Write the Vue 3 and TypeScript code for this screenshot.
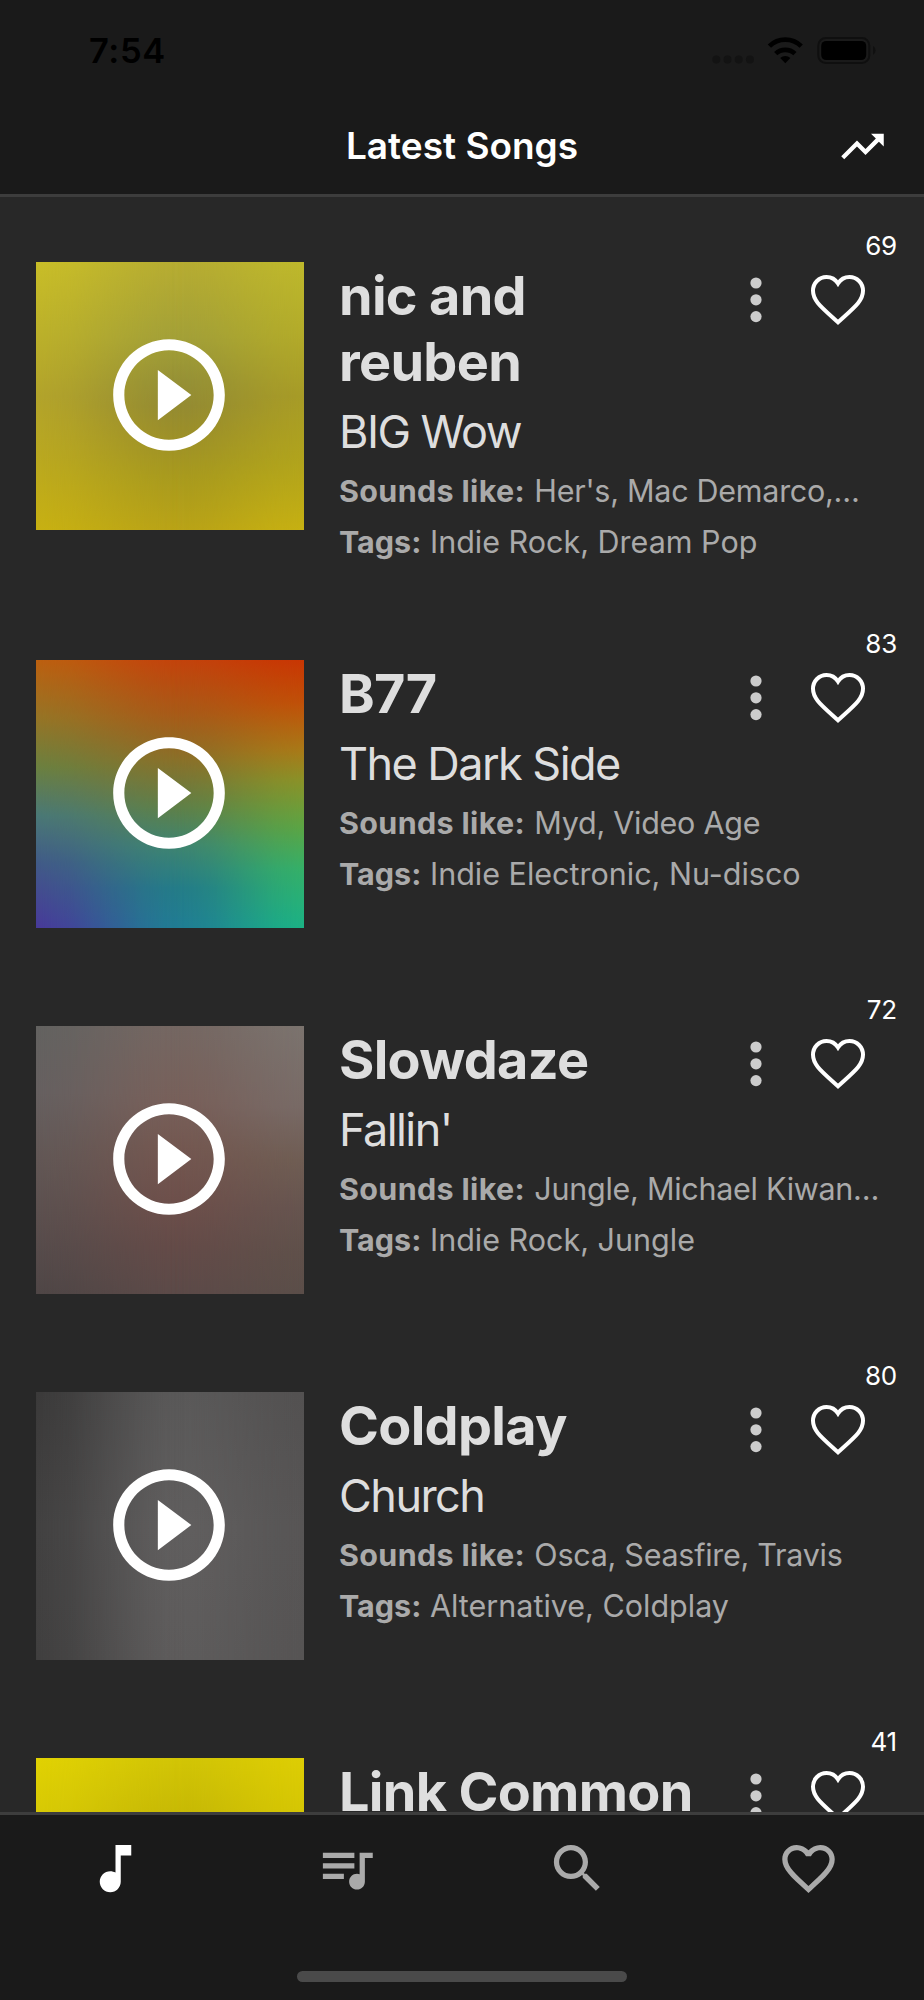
<script setup lang="ts">
interface Song {
  artist: string[]
  title?: string
  soundsLike?: string
  tags?: string
  likes: number
  cover: string
}

const songs: Song[] = [
  { artist: ['nic and', 'reuben'], title: 'BIG Wow', soundsLike: "Her's, Mac Demarco,…", tags: 'Indie Rock, Dream Pop', likes: 69, cover: 'olive' },
  { artist: ['B77'], title: 'The Dark Side', soundsLike: 'Myd, Video Age', tags: 'Indie Electronic, Nu-disco', likes: 83, cover: 'spectrum' },
  { artist: ['Slowdaze'], title: "Fallin'", soundsLike: 'Jungle, Michael Kiwan…', tags: 'Indie Rock, Jungle', likes: 72, cover: 'clay' },
  { artist: ['Coldplay'], title: 'Church', soundsLike: 'Osca, Seasfire, Travis', tags: 'Alternative, Coldplay', likes: 80, cover: 'graphite' },
  { artist: ['Link Common'], likes: 41, cover: 'lemon' },
]

const tabs = [
  { name: 'Songs', active: true, d: 'M12 3v10.55c-.59-.34-1.27-.55-2-.55-2.21 0-4 1.79-4 4s1.79 4 4 4 4-1.79 4-4V7h4V3h-6z' },
  { name: 'Playlists', active: false, d: 'M15 6H3v2h12V6zm0 4H3v2h12v-2zM3 16h8v-2H3v2zM17 6v8.18c-.31-.11-.65-.18-1-.18-1.66 0-3 1.34-3 3s1.34 3 3 3 3-1.34 3-3V8h3V6h-5z' },
  { name: 'Search', active: false, d: 'M15.5 14h-.79l-.28-.27C15.41 12.59 16 11.11 16 9.5 16 5.91 13.09 3 9.5 3S3 5.91 3 9.5 5.91 16 9.5 16c1.61 0 3.09-.59 4.23-1.57l.27.28v.79l5 4.99L20.49 19l-4.99-5zm-6 0C7.01 14 5 11.99 5 9.5S7.01 5 9.5 5 14 7.01 14 9.5 11.99 14 9.5 14z' },
  { name: 'Favourites', active: false, d: 'M16.5 3c-1.74 0-3.41.81-4.5 2.09C10.91 3.81 9.24 3 7.5 3 4.42 3 2 5.42 2 8.5c0 3.78 3.4 6.86 8.55 11.54L12 21.35l1.45-1.32C18.6 15.36 22 12.28 22 8.5 22 5.42 19.58 3 16.5 3zm-4.4 15.55l-.1.1-.1-.1C7.14 14.24 4 11.39 4 8.5 4 6.5 5.5 5 7.5 5c1.54 0 3.04.99 3.57 2.36h1.87C13.46 5.99 14.96 5 16.5 5c2 0 3.5 1.5 3.5 3.5 0 2.89-3.14 5.74-7.9 10.05z' },
]
</script>

<template>
  <div class="phone">
    <header class="top">
      <div class="status">
        <span class="time">7:54</span>
        <svg class="status-icons" viewBox="0 0 168 34" aria-hidden="true">
          <g fill="#131313">
            <circle cx="8.3" cy="26.6" r="4" /><circle cx="19.5" cy="26.6" r="4" /><circle cx="30.7" cy="26.6" r="4" /><circle cx="41.9" cy="26.6" r="4" />
          </g>
          <path d="M77.3 30.2l-5.1-5.2a7.4 7.4 0 0 1 10.2 0z" />
          <g fill="none" stroke="#000" stroke-width="4.7">
            <path d="M67.7 20.6a14 14 0 0 1 19.2 0" />
            <path d="M61.4 13.2a22.6 22.6 0 0 1 31.8 0" />
          </g>
          <rect x="110.3" y="5" width="51" height="25" rx="7.5" fill="none" stroke="#0f0f0f" stroke-width="2" />
          <rect x="113.2" y="7.9" width="45" height="19.2" rx="5" />
          <path d="M165 13v9q2.600-1.300 2.600-4.500T165 13z" fill="#101010" />
        </svg>
      </div>
      <div class="bar">
        <h1 class="heading">Latest Songs</h1>
        <svg class="trend" viewBox="0 0 24 24"><path d="M16 6l2.290 2.290-4.880 4.880-4-4L2 16.590 3.410 18l6-6 4 4 6.300-6.290L22 12V6z" /></svg>
      </div>
    </header>

    <main class="list">
      <article v-for="song in songs" :key="song.cover" class="song">
        <div class="cover" :class="song.cover">
          <svg class="play" viewBox="0 0 24 24"><path d="M10 16.500l6-4.500-6-4.500v9zM12 2C6.480 2 2 6.480 2 12s4.480 10 10 10 10-4.480 10-10S17.520 2 12 2zm0 18c-4.410 0-8-3.590-8-8s3.590-8 8-8 8 3.590 8 8-3.590 8-8 8z" /></svg>
        </div>
        <div class="info">
          <div class="row">
            <h2 class="artist"><span v-for="line in song.artist" :key="line">{{ line }}</span></h2>
            <svg class="more" viewBox="0 0 12 46"><circle cx="6" cy="6" r="5.600" /><circle cx="6" cy="22.800" r="5.600" /><circle cx="6" cy="39.600" r="5.600" /></svg>
            <div class="like">
              <span class="count">{{ song.likes }}</span>
              <svg class="heart" viewBox="0 0 54 50"><path d="M27 8.500C24.500 4.500 20 2 15.500 2 8 2 2 8 2 15.800 2 26 10.500 32.200 27 47.300 43.500 32.200 52 26 52 15.800 52 8 46 2 38.500 2 34 2 29.500 4.500 27 8.500z" /></svg>
            </div>
          </div>
          <p v-if="song.title" class="title">{{ song.title }}</p>
          <p v-if="song.soundsLike" class="meta sounds"><b>Sounds like:</b> {{ song.soundsLike }}</p>
          <p v-if="song.tags" class="meta tags"><b>Tags:</b> {{ song.tags }}</p>
        </div>
      </article>
    </main>

    <footer class="bottom">
      <nav class="tabs">
        <svg v-for="tab in tabs" :key="tab.name" class="tab" :class="{ active: tab.active }" viewBox="0 0 24 24" role="img" :aria-label="tab.name"><path :d="tab.d" /></svg>
      </nav>
      <div class="home"></div>
    </footer>
  </div>
</template>

<style>
body { margin: 0; background: #1a1a1a; }
</style>

<style scoped>
.phone {
  box-sizing: border-box;
  width: 924px;
  height: 2000px;
  display: flex;
  flex-direction: column;
  overflow: hidden;
  background: #282828;
  color: #fff;
  font-family: Inter, "Liberation Sans", sans-serif;
}
h1, h2, p { margin: 0; }
svg { display: block; flex: none; }

.top {
  flex: none;
  box-sizing: border-box;
  height: 197px;
  background: #1a1a1a;
  border-bottom: 3px solid #3d3d3d;
}
.status {
  box-sizing: border-box;
  height: 100px;
  display: flex;
  justify-content: space-between;
  align-items: flex-start;
  padding: 33px 48px 0 89px;
  color: #000;
}
.time { font-size: 34.5px; font-weight: 600; line-height: 36px; letter-spacing: 0.6px; }
.status-icons { width: 168px; height: 34px; }
.bar {
  display: grid;
  grid-template-columns: 1fr auto 1fr;
  align-items: center;
  height: 92px;
  padding-right: 36px;
  padding-left: 36px;
}
.heading { grid-column: 2; font-size: 37px; font-weight: 600; line-height: 44px; letter-spacing: 0; }
.trend { justify-self: end; width: 51px; height: 51px; fill: #fff; }

.list { flex: 1; min-height: 0; overflow: hidden; }
.song { display: flex; gap: 35px; padding: 65px 0 33px 36px; }
.cover {
  position: relative;
  flex: none;
  width: 268px;
  height: 268px;
  background: linear-gradient(var(--left));
}
.cover::before, .cover::after { content: ""; position: absolute; inset: 0; }
.cover::before {
  --fade: linear-gradient(to right, transparent, rgba(0, 0, 0, 0.18) 13%, rgba(0, 0, 0, 0.5) 26%, rgba(0, 0, 0, 0.82) 40%, rgba(0, 0, 0, 0.95) 48%, #000 56%);
  background: linear-gradient(var(--middle));
  -webkit-mask-image: var(--fade);
  mask-image: var(--fade);
}
.cover::after {
  --fade: linear-gradient(to right, transparent 50%, rgba(0, 0, 0, 0.06) 58%, rgba(0, 0, 0, 0.2) 66%, rgba(0, 0, 0, 0.5) 77%, rgba(0, 0, 0, 0.82) 89%, #000);
  background: linear-gradient(var(--right));
  -webkit-mask-image: var(--fade);
  mask-image: var(--fade);
}
.olive {
  --left: #c9be28, #bdb22a 25%, #b3a42b 50%, #bba91f 75%, #c8b112;
  --middle: #b6ac32, #a3a038 28%, #959036 45%, #948b32 54%, #9a8e2b 62%, #a89a1e 80%, #b9a317;
  --right: #beb82c, #b3ac2a 25%, #a79b27 50%, #b1a41c 75%, #c6b012;
}
.spectrum {
  --left: #bc6010, #957526 22%, #6b8040 40%, #4a7876 58%, #415a88 76%, #483a9a;
  --middle: #c3430c, #a85a18 20%, #8a7029 37%, #5f8048 55%, #3f8570 69%, #247c88 85%, #207d94;
  --right: #c83603, #c05008 16%, #a87a18 34%, #8a9228 45%, #5aa545 63%, #35b068 78%, #1bb285;
}
.clay {
  --left: #636260, #666060 25%, #625755 50%, #5a4e4d 75%, #4f4646;
  --middle: #756762, #78605a 28%, #745851 45%, #6e504b 65%, #644b48 82%, #5c4a48;
  --right: #7b736e, #786a66 30%, #6f5d53 50%, #66544f 68%, #5f504a 85%, #5b4e49;
}
.graphite {
  --left: #3b3a3a, #424141 50%, #403f3f;
  --middle: #5a5959, #615f5f 50%, #5e5c5c;
  --right: #535151, #575555 50%, #565454;
}
.lemon {
  --left: #e1d203, #d6c806 25%, #cabb0a 60%, #dece05;
  --middle: #d2c506, #c6b805 22%, #b5a808 55%, #cfc006;
  --right: #ddcd04, #d3c404 25%, #c8ba06 60%, #dccb04;
}
.play { position: absolute; z-index: 1; left: 66px; top: 66px; width: 134px; height: 134px; fill: #fff; }

.info { flex: 1; min-width: 0; }
.row { display: flex; align-items: flex-start; }
.artist {
  box-sizing: border-box;
  width: 411px;
  padding-top: 1px;
  display: flex;
  flex-direction: column;
  font-size: 54px;
  font-weight: 700;
  line-height: 66px;
  letter-spacing: -0.7px;
  color: #dedede;
}
.more { width: 12px; height: 46px; margin-top: 15px; fill: #ccc; }
.like { position: relative; margin: 13px 0 0 49px; }
.heart { width: 54px; height: 50px; overflow: visible; fill: none; stroke: #fff; stroke-width: 4; }
.count {
  position: absolute;
  right: -32px;
  top: -45px;
  font-size: 26px;
  line-height: 32px;
  letter-spacing: -0.2px;
}
.title { padding-top: 8px; height: 56px; font-size: 45px; line-height: 57px; letter-spacing: -1.550px; color: #dedede; }
.meta { font-size: 30.500px; line-height: 64px; white-space: nowrap; color: #aaa; }
.meta b { font-weight: 700; }
.sounds { height: 51px; letter-spacing: -0.270px; }
.sounds b { letter-spacing: 0.330px; margin-right: 1px; }
.tags { height: 52px; letter-spacing: 0; }

.bottom {
  flex: none;
  box-sizing: border-box;
  height: 188px;
  display: flex;
  flex-direction: column;
  justify-content: space-between;
  align-items: center;
  padding: 22px 0 18px;
  background: #1a1a1a;
  border-top: 3px solid #3d3d3d;
}
.tabs { width: 100%; display: grid; grid-template-columns: repeat(4, 1fr); justify-items: center; }
.tab { width: 63px; height: 63px; fill: #aaa; }
.tab.active { fill: #fff; }
.home { width: 330px; height: 11px; border-radius: 6px; background: #4a4a4a; }
</style>
